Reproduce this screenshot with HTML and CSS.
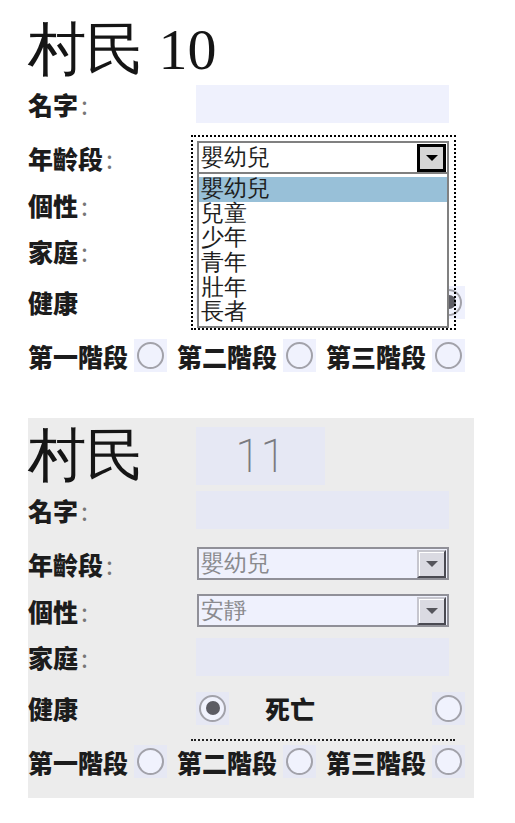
FILE: index.html
```html
<!DOCTYPE html>
<html>
<head>
    <meta charset="utf-8">
    <title>村民</title>
    <link rel="stylesheet" href="styles.css">
</head>
<body>

    <div class="card">
        <div class="titlerow"><span class="title">村民 10</span></div>

        <div class="row r-name">
            <span class="label">名字<span class="colon">:</span></span>
            <div class="textbox"></div>
        </div>

        <div class="row r-age">
            <span class="label">年齡段<span class="colon">:</span></span>
            <div class="select-wrap">
                <div class="select open"><span class="select-text">嬰幼兒</span><span class="select-btn"><span class="arrow"></span></span></div>
                <div class="droplist">
                    <div class="option picked">嬰幼兒</div>
                    <div class="option">兒童</div>
                    <div class="option">少年</div>
                    <div class="option">青年</div>
                    <div class="option">壯年</div>
                    <div class="option">長者</div>
                </div>
                <div class="focus-ring"></div>
            </div>
        </div>

        <div class="row r-char">
            <span class="label">個性<span class="colon">:</span></span>
            <div class="select"><span class="select-text">安靜</span><span class="select-btn"><span class="arrow"></span></span></div>
        </div>

        <div class="row r-family">
            <span class="label">家庭<span class="colon">:</span></span>
            <div class="textbox"></div>
        </div>

        <div class="row r-health">
            <span class="label">健康</span>
            <div class="health">
                <span class="radio-box"><span class="radio"></span></span>
                <span class="dead">死亡</span>
                <span class="radio-box push"><span class="radio on"></span></span>
            </div>
        </div>

        <div class="divider hidden"></div>

        <div class="row r-stage">
            <span class="stage">第一階段</span><span class="radio-box"><span class="radio"></span></span>
            <span class="stage">第二階段</span><span class="radio-box"><span class="radio"></span></span>
            <span class="stage">第三階段</span><span class="radio-box"><span class="radio"></span></span>
        </div>
    </div>

    <div class="card grey">
        <div class="titlerow">
            <span class="title title-col">村民</span>
            <div class="numbox">11</div>
        </div>

        <div class="row r-name">
            <span class="label">名字<span class="colon">:</span></span>
            <div class="textbox"></div>
        </div>

        <div class="row r-age">
            <span class="label">年齡段<span class="colon">:</span></span>
            <div class="select"><span class="select-text">嬰幼兒</span><span class="select-btn"><span class="arrow"></span></span></div>
        </div>

        <div class="row r-char">
            <span class="label">個性<span class="colon">:</span></span>
            <div class="select"><span class="select-text">安靜</span><span class="select-btn"><span class="arrow"></span></span></div>
        </div>

        <div class="row r-family">
            <span class="label">家庭<span class="colon">:</span></span>
            <div class="textbox"></div>
        </div>

        <div class="row r-health">
            <span class="label">健康</span>
            <div class="health">
                <span class="radio-box"><span class="radio on"></span></span>
                <span class="dead">死亡</span>
                <span class="radio-box push"><span class="radio"></span></span>
            </div>
        </div>

        <div class="divider"></div>

        <div class="row r-stage">
            <span class="stage">第一階段</span><span class="radio-box"><span class="radio"></span></span>
            <span class="stage">第二階段</span><span class="radio-box"><span class="radio"></span></span>
            <span class="stage">第三階段</span><span class="radio-box"><span class="radio"></span></span>
        </div>
    </div>

</body>
</html>
```

FILE: styles.css
```css
body{
    margin:8px;
    background-color:white;
    color:#1c1c1c;
    font-family:"Noto Sans CJK TC", sans-serif;
}

.card{
    width:446px;
    margin:4px 0 0 20px;
    padding:9px 0 20px;
}

.card.grey{
    margin-top:26px;
    background-color:#ececec;
}

.titlerow{
    display:flex;
    align-items:center;
    height:58px;
}

.title{
    font-family:"Liberation Serif", serif;
    font-size:58px;
    line-height:58px;
    color:#151515;
}

.title-col{
    width:168px;
    flex:none;
}

.numbox{
    width:129px;
    height:58px;
    background-color:rgba(225,229,251,0.53);
    font-family:Roboto, sans-serif;
    font-weight:200;
    font-size:46px;
    line-height:58px;
    color:#7a7a80;
    text-align:center;
}

.row{
    display:flex;
    align-items:center;
}

.label{
    width:168px;
    flex:none;
    font-size:25px;
    font-weight:900;
}

.colon{
    font-weight:normal;
    color:#777;
    margin-left:3px;
}

.r-name{ margin-top:6px; height:38px; }
.r-age{ margin-top:18px; height:33px; }
.r-char{ margin-top:14px; height:33px; }
.r-family{ margin-top:11px; height:38px; }
.r-health{ margin-top:16px; height:32px; }
.r-stage{ margin-top:4px; height:33px; }

.textbox{
    width:253px;
    height:38px;
    background-color:rgba(225,229,251,0.53);
}

.select-wrap{
    position:relative;
    margin-left:1px;
}

.select{
    box-sizing:border-box;
    width:252px;
    height:33px;
    border:2px solid #909098;
    background-color:#eff1fd;
    display:flex;
    align-items:center;
}

.row > .select{
    margin-left:1px;
}

.select-text{
    font-family:"Liberation Serif", serif;
    font-size:23px;
    color:#8a8a8e;
    padding-left:2px;
}

.select-btn{
    box-sizing:border-box;
    width:29px;
    height:28px;
    margin-left:auto;
    margin-right:1px;
    border:2px solid;
    border-color:#c6c6ce #4a4a52 #4a4a52 #c6c6ce;
    background-color:#dadae2;
    box-shadow:inset 1px 1px white;
    display:flex;
    align-items:center;
    justify-content:center;
}

.arrow{
    width:0;
    height:0;
    border-left:6px solid transparent;
    border-right:6px solid transparent;
    border-top:6px solid #55555c;
}

.select.open{
    border-color:#808080;
    background-color:white;
}

.select.open .select-text{
    color:#1e1e1e;
}

.select.open .select-btn{
    border:3px solid black;
    background-color:#d6d6d6;
    box-shadow:none;
}

.select.open .arrow{
    border-top-color:black;
}

.droplist{
    position:absolute;
    top:100%;
    left:0;
    z-index:2;
    box-sizing:border-box;
    width:252px;
    padding:3px 0 1px;
    border:2px solid #808080;
    border-top:none;
    background-color:white;
}

.option{
    font-family:"Liberation Serif", serif;
    font-size:23px;
    line-height:24.7px;
    height:24.7px;
    padding-left:2px;
    color:#1e1e1e;
}

.option.picked{
    background-color:#98c0d8;
}

.focus-ring{
    position:absolute;
    top:-6px;
    left:-6px;
    width:265px;
    height:195px;
    box-sizing:border-box;
    border:2px dotted black;
    z-index:3;
}

.health{
    display:flex;
    align-items:center;
    width:269px;
}

.dead{
    margin-left:36px;
    font-size:25px;
    font-weight:900;
}

.push{
    margin-left:auto;
}

.radio-box{
    width:33px;
    height:33px;
    flex:none;
    background-color:rgba(225,229,251,0.53);
    display:flex;
    align-items:center;
    justify-content:center;
}

.radio{
    box-sizing:border-box;
    width:27px;
    height:27px;
    border:2.5px solid #a2a2aa;
    border-radius:50%;
    background-color:#f0f2fd;
    display:flex;
    align-items:center;
    justify-content:center;
}

.radio.on::after{
    content:"";
    width:14px;
    height:14px;
    border-radius:50%;
    background-color:#5c5c64;
}

.divider{
    margin:15px 0 0 163px;
    width:264px;
    border-top:2px dotted #222;
}

.divider.hidden{
    border-top-color:transparent;
}

.stage{
    font-size:25px;
    font-weight:900;
    margin-right:6px;
}

.radio-box + .stage{
    margin-left:10px;
}
```
